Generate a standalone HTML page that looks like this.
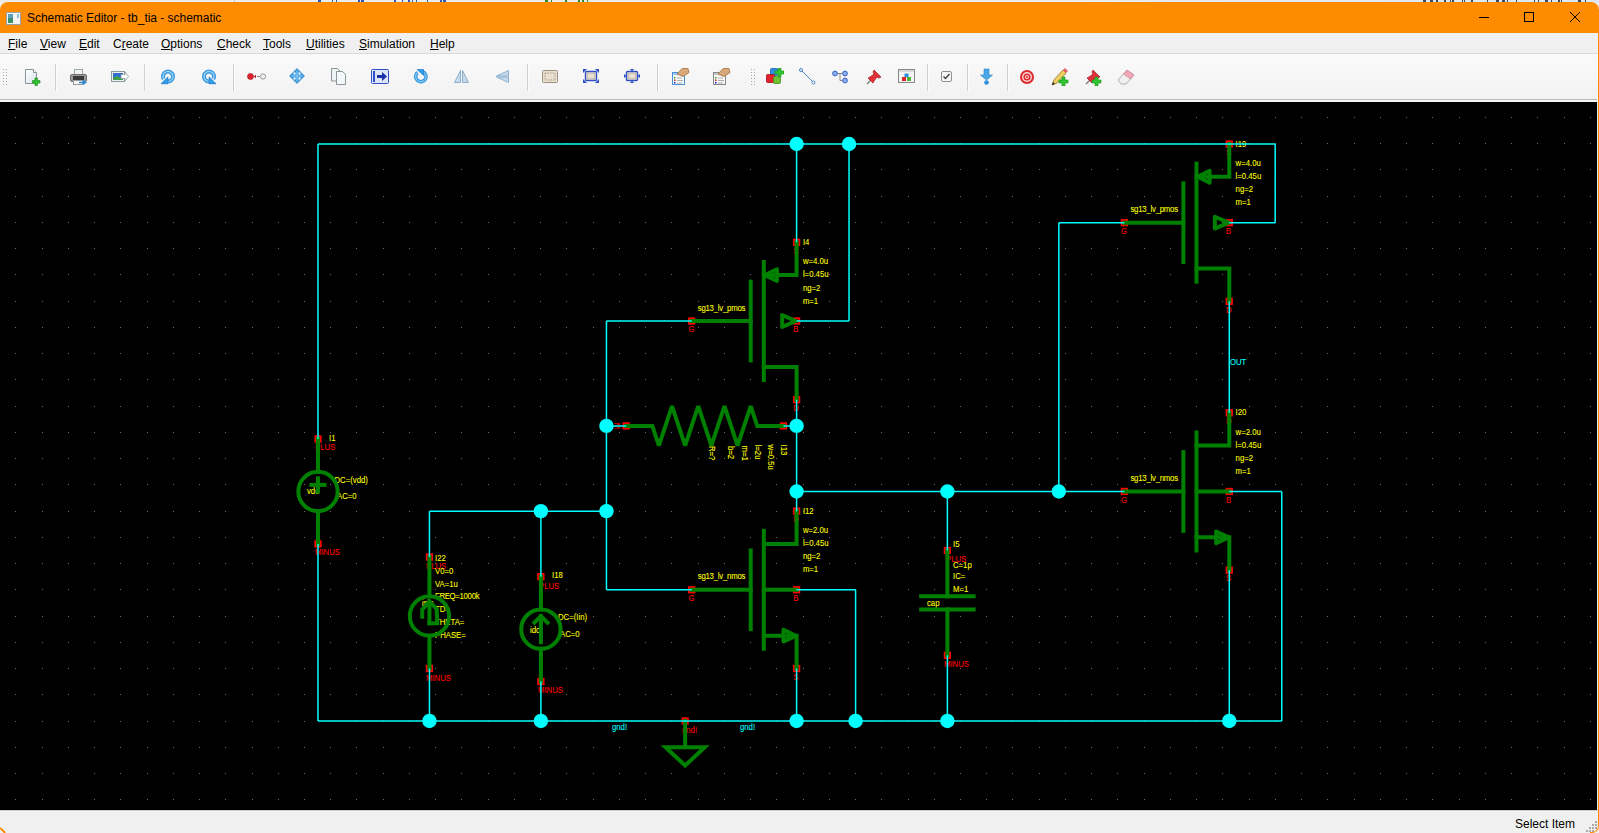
<!DOCTYPE html>
<html><head><meta charset="utf-8">
<style>
*{margin:0;padding:0;box-sizing:border-box}
html,body{width:1599px;height:833px;overflow:hidden;background:#f0f0f0;font-family:"Liberation Sans",sans-serif}
#top{position:absolute;left:0;top:0;width:1599px;height:3px;background:linear-gradient(90deg,#ececec 0,#e9ecef 60%,#dde6f2 100%)}
#title{position:absolute;left:0;top:2px;width:1599px;height:31px;background:#ff8c00;border-radius:8px 8px 0 0}
#title .t{position:absolute;left:27px;top:9px;font-size:12px;color:#000;letter-spacing:-0.03px}
#title .ic{position:absolute;left:6px;top:10px;width:15px;height:13px}
.wc{position:absolute;top:0}
#menu{position:absolute;left:0;top:33px;width:1598px;height:21px;background:#f0f0f0;border-bottom:1px solid #dadada}
#menu span{position:absolute;top:4px;font-size:12px;color:#000}
#menu u{text-decoration:underline;text-underline-offset:1px;text-decoration-thickness:1px}
#tb{position:absolute;left:0;top:54px;width:1598px;height:48px;background:linear-gradient(#fafafa,#f1f1f1)}
#tbb{position:absolute;left:0;top:99px;width:1597px;height:1px;background:#b9b9b9}
#tbw{position:absolute;left:0;top:100px;width:1597px;height:2px;background:#f7f7f7}
.sep{position:absolute;top:10px;width:2px;height:27px;background:#d0d0d0;border-right:1px solid #fcfcfc}
.ico{position:absolute}
.sch{position:absolute;left:0;top:102px}
#status{position:absolute;left:0;top:810px;width:1598px;height:23px;background:#f0f0f0;border-top:1px solid #cdcdcd;box-shadow:inset 0 1px 0 #f7f7f7}
#status .t{position:absolute;left:1515px;top:6px;font-size:12px;color:#000}
#rb{position:absolute;left:1590px;top:10px;width:9px;height:823px;border-right:1px solid #ff8c00;border-bottom:1px solid #ff8c00;border-bottom-right-radius:7px}
#rl{position:absolute;left:1597px;top:102px;width:1px;height:708px;background:#dfe6ee}
.grip{position:absolute;width:2px;height:2px;background:#a8a8a8}
.y{fill:#ffff00;stroke:#ffff00;stroke-width:0.08}.r{fill:#ff0000;stroke:#ff0000;stroke-width:0.08}.c{fill:#00ffff;stroke:#00ffff;stroke-width:0.08}
</style></head><body>
<div id="top"></div>
<svg style="position:absolute;left:0;top:0" width="1599" height="3"><rect x="234" y="0" width="1" height="2" fill="#c4c4c4"/><rect x="318" y="0" width="3" height="2" fill="#2a58c0"/><rect x="332" y="0" width="1" height="2" fill="#2a58c0"/><rect x="336" y="0" width="1" height="2" fill="#2a58c0"/><rect x="358" y="0" width="2" height="2" fill="#2a58c0"/><rect x="361" y="0" width="3" height="2" fill="#2a58c0"/><rect x="394" y="0" width="2" height="2" fill="#2a58c0"/><rect x="402" y="0" width="1" height="2" fill="#2a58c0"/><rect x="408" y="0" width="2" height="2" fill="#2a58c0"/><rect x="412" y="0" width="1" height="2" fill="#2a58c0"/><rect x="416" y="0" width="1" height="2" fill="#2a58c0"/><rect x="427" y="0" width="1" height="2" fill="#2a58c0"/><rect x="440" y="0" width="2" height="2" fill="#2a58c0"/><rect x="443" y="0" width="3" height="2" fill="#2a58c0"/><rect x="545" y="0" width="3" height="2" fill="#2a8a2a"/><rect x="551" y="0" width="1" height="2" fill="#2a8a2a"/><rect x="565" y="0" width="2" height="2" fill="#2a8a2a"/><rect x="578" y="0" width="2" height="2" fill="#2a8a2a"/><rect x="582" y="0" width="2" height="2" fill="#2a8a2a"/><rect x="587" y="0" width="1" height="2" fill="#2a8a2a"/><rect x="1423" y="0" width="3" height="2" fill="#3a4a60"/><rect x="1430" y="0" width="3" height="2" fill="#3a4a60"/><rect x="1436" y="0" width="2" height="2" fill="#3a4a60"/><rect x="1444" y="0" width="2" height="2" fill="#3a4a60"/><rect x="1450" y="0" width="1" height="2" fill="#3a4a60"/><rect x="1452" y="0" width="2" height="2" fill="#3a4a60"/><rect x="1462" y="0" width="1" height="2" fill="#3a4a60"/><rect x="1464" y="0" width="1" height="2" fill="#3a4a60"/><rect x="1471" y="0" width="2" height="2" fill="#3a4a60"/><rect x="1487" y="0" width="1" height="2" fill="#3a4a60"/><rect x="1496" y="0" width="3" height="2" fill="#3a4a60"/><rect x="1502" y="0" width="3" height="2" fill="#3a4a60"/><rect x="1507" y="0" width="1" height="2" fill="#3a4a60"/><rect x="1516" y="0" width="1" height="2" fill="#3a4a60"/><rect x="1534" y="0" width="1" height="2" fill="#3a4a60"/><rect x="1538" y="0" width="1" height="2" fill="#3a4a60"/><rect x="1545" y="0" width="3" height="2" fill="#3a4a60"/><rect x="1551" y="0" width="1" height="2" fill="#3a4a60"/><rect x="1558" y="0" width="2" height="2" fill="#3a4a60"/><rect x="1561" y="0" width="1" height="2" fill="#3a4a60"/><rect x="1578" y="0" width="3" height="2" fill="#3a4a60"/><rect x="1585" y="0" width="1" height="2" fill="#3a4a60"/></svg>
<div id="title">
<svg class="ic" width="15" height="13" viewBox="0 0 15 13"><rect x="0.5" y="0.5" width="14" height="12" fill="#f4f4f4" stroke="#9aa3ad"/><rect x="2" y="2" width="5" height="9" fill="#3d8f6a"/><rect x="2" y="2" width="5" height="4" fill="#5a9fc0"/><rect x="11" y="2" width="2" height="4" fill="#8fc0d8"/></svg>
<div class="t">Schematic Editor - tb_tia - schematic</div>
<svg class="wc" style="left:1470px" width="120" height="31" viewBox="0 0 120 31">
<path d="M9 15.5h10" stroke="#000" stroke-width="1"/>
<rect x="54.5" y="10.5" width="9" height="9" fill="none" stroke="#000" stroke-width="1"/>
<path d="M100 10l10 10M110 10l-10 10" stroke="#000" stroke-width="1"/>
</svg>
</div>
<div id="menu">
<span style="left:8px"><u>F</u>ile</span>
<span style="left:40px"><u>V</u>iew</span>
<span style="left:79px"><u>E</u>dit</span>
<span style="left:113px">C<u>r</u>eate</span>
<span style="left:161px"><u>O</u>ptions</span>
<span style="left:217px"><u>C</u>heck</span>
<span style="left:263px"><u>T</u>ools</span>
<span style="left:306px"><u>U</u>tilities</span>
<span style="left:359px"><u>S</u>imulation</span>
<span style="left:430px"><u>H</u>elp</span>
</div>
<div id="tb">
<svg class="ico" style="left:3px;top:14px" width="5" height="18" viewBox="0 0 5 18"><g fill="#a8a8a8"><rect x="0" y="1" width="1" height="1"/><rect x="3" y="1" width="1" height="1"/><rect x="0" y="4" width="1" height="1"/><rect x="3" y="4" width="1" height="1"/><rect x="0" y="7" width="1" height="1"/><rect x="3" y="7" width="1" height="1"/><rect x="0" y="10" width="1" height="1"/><rect x="3" y="10" width="1" height="1"/><rect x="0" y="13" width="1" height="1"/><rect x="3" y="13" width="1" height="1"/><rect x="0" y="16" width="1" height="1"/><rect x="3" y="16" width="1" height="1"/></g></svg>
<svg class="ico" style="left:24px;top:14px" width="17" height="18" viewBox="0 0 17 18"><defs><linearGradient id="pg" x1="0" y1="0" x2="1" y2="1"><stop offset="0" stop-color="#ffffff"/><stop offset="1" stop-color="#d8e4e8"/></linearGradient></defs><path d="M1.5 1.5h8l3 3v11h-11z" fill="url(#pg)" stroke="#8a9598"/><path d="M9.5 1.5v3h3" fill="#fff" stroke="#8a9598"/><path d="M11 10h2.4v2.6h2.6v2.4h-2.6v2.6h-2.4v-2.6h-2.6v-2.4h2.6z" fill="#2fc52f" stroke="#1a8f1a" stroke-width="0.7"/></svg>
<div class="sep" style="left:55px"></div>
<svg class="ico" style="left:70px;top:14px" width="18" height="18" viewBox="0 0 18 18"><rect x="4.5" y="1.5" width="8" height="6" fill="#f4f4f4" stroke="#9aa"/><rect x="0.5" y="6.5" width="16" height="7" rx="1.5" fill="#9a9a9a" stroke="#707070"/><rect x="3" y="8" width="11" height="4" fill="#3a3a3a"/><rect x="3.5" y="12.5" width="9" height="4" fill="#fafafa" stroke="#999"/><path d="M9 14.5h6M13 12.5l2.5 2-2.5 2" stroke="#2a8ad8" stroke-width="1.6" fill="none"/></svg>
<svg class="ico" style="left:111px;top:15px" width="18" height="15" viewBox="0 0 18 15"><rect x="0.5" y="2.5" width="13" height="10" fill="#f0f0f0" stroke="#8a9aa0"/><rect x="2" y="4" width="10" height="7" fill="#2f6fcf"/><path d="M2 9l4-2 6 3v1H2z" fill="#3f9f4f"/><path d="M10 5.5h4v-2.5l3.5 4.5-3.5 4.5v-2.5h-4z" fill="#fff" stroke="#8a9aa0" stroke-width="0.8"/></svg>
<div class="sep" style="left:144px"></div>
<svg class="ico" style="left:160px;top:15px" width="16" height="16" viewBox="0 0 16 16"><g><path d="M8 12.5A5 5 0 1 0 3.67 10" fill="none" stroke="#3d9be0" stroke-width="4"/><path d="M8 12.5A5 5 0 1 0 3.67 10" fill="none" stroke="#9ad6fa" stroke-width="1.2"/><path d="M1 14.7H7.9V8z" fill="#2aa0f0" stroke="#1a6fc0" stroke-width="0.7"/></g></svg>
<svg class="ico" style="left:201px;top:15px" width="16" height="16" viewBox="0 0 16 16"><g transform="translate(16 0) scale(-1 1)"><path d="M8 12.5A5 5 0 1 0 3.67 10" fill="none" stroke="#3d9be0" stroke-width="4"/><path d="M8 12.5A5 5 0 1 0 3.67 10" fill="none" stroke="#9ad6fa" stroke-width="1.2"/><path d="M1 14.7H7.9V8z" fill="#2aa0f0" stroke="#1a6fc0" stroke-width="0.7"/></g></svg>
<div class="sep" style="left:233px"></div>
<svg class="ico" style="left:247px;top:18px" width="20" height="9" viewBox="0 0 20 9"><circle cx="3.5" cy="4.5" r="3" fill="#e0202a" stroke="#a01018" stroke-width="0.6"/><path d="M9 2.8l-2 1.7 2 1.7z" fill="#a01018"/><path d="M10 4.5h3" stroke="#888" stroke-width="1"/><circle cx="16" cy="4.5" r="2.6" fill="#f0f0f0" stroke="#9a9a9a" stroke-width="1"/></svg>
<svg class="ico" style="left:289px;top:14px" width="16" height="16" viewBox="0 0 16 16"><path d="M8 0.5L15.5 8 8 15.5 0.5 8z" fill="#3a9ae0" stroke="#2a7ac0" stroke-width="0.6"/><rect x="4.5" y="4.5" width="2" height="2" fill="#fff"/><rect x="9.5" y="4.5" width="2" height="2" fill="#fff"/><rect x="4.5" y="9.5" width="2" height="2" fill="#fff"/><rect x="9.5" y="9.5" width="2" height="2" fill="#fff"/><path d="M8 2.5v11M2.5 8h11" stroke="#8fd0f8" stroke-width="1"/></svg>
<svg class="ico" style="left:331px;top:14px" width="17" height="18" viewBox="0 0 17 18"><path d="M0.5 0.5h6l2.5 2.5v10H0.5z" fill="#eef3f4" stroke="#8a9598"/><path d="M5.5 3.5h6l3 3v10h-9z" fill="#f4f8f9" stroke="#8a9598"/></svg>
<svg class="ico" style="left:371px;top:15px" width="18" height="15" viewBox="0 0 18 15"><rect x="0.5" y="0.5" width="17" height="14" rx="1" fill="#dde6f8" stroke="#3050c8"/><rect x="2" y="2" width="2" height="11" fill="#3050c8"/><path d="M6 6h5v-3l5 4.5-5 4.5v-3h-5z" fill="#1a2fa8"/></svg>
<svg class="ico" style="left:413px;top:15px" width="16" height="16" viewBox="0 0 16 16"><path d="M4.5 3.5A5.2 5.2 0 1 0 9.5 2.6" fill="none" stroke="#3d9be0" stroke-width="3.6"/><path d="M4.5 3.5A5.2 5.2 0 1 0 9.5 2.6" fill="none" stroke="#9ad6fa" stroke-width="1"/><path d="M4 0.5h6.5v6z" fill="#2aa0f0" stroke="#1a6fc0" stroke-width="0.6"/></svg>
<svg class="ico" style="left:454px;top:16px" width="15" height="13" viewBox="0 0 15 13"><path d="M6.5 0.5v12h-6z" fill="#c8daea" stroke="#8ab0d0"/><path d="M8.5 0.5v12h6z" fill="#c8daea" stroke="#8ab0d0"/></svg>
<svg class="ico" style="left:496px;top:16px" width="13" height="13" viewBox="0 0 13 13"><path d="M12.5 0.5L0.5 6h12z" fill="#c8daea" stroke="#8ab0d0"/><path d="M12.5 12.5L0.5 7h12z" fill="#c8daea" stroke="#8ab0d0"/></svg>
<div class="sep" style="left:527px"></div>
<svg class="ico" style="left:542px;top:16px" width="17" height="14" viewBox="0 0 17 14"><rect x="0.5" y="0.5" width="15" height="12" rx="1" fill="#e8e0d0" stroke="#a09080"/><rect x="3" y="3" width="10" height="7" fill="none" stroke="#b0a090" stroke-dasharray="1.5 1"/></svg>
<svg class="ico" style="left:583px;top:15px" width="17" height="15" viewBox="0 0 17 15"><rect x="2.5" y="2.5" width="11" height="9" rx="1" fill="#e8e0d0" stroke="#3050c8" stroke-width="1.4"/><rect x="4.5" y="4.5" width="7" height="5" fill="none" stroke="#b0a090" stroke-dasharray="1 1"/><path d="M0 0h4l-4 4zM16 0h-4l4 4zM0 14h4l-4-4zM16 14h-4l4-4z" fill="#3050c8"/></svg>
<svg class="ico" style="left:624px;top:15px" width="17" height="15" viewBox="0 0 17 15"><rect x="2.5" y="2.5" width="11" height="9" rx="1" fill="#e8e0d0" stroke="#3050c8" stroke-width="1.4"/><rect x="4.5" y="4.5" width="7" height="5" fill="none" stroke="#b0a090" stroke-dasharray="1 1"/><path d="M6 0h4l-2 2.5zM6 14h4l-2-2.5zM0 5v4l2.5-2zM16 5v4l-2.5-2z" fill="#3050c8"/></svg>
<div class="sep" style="left:657px"></div>
<svg class="ico" style="left:672px;top:14px" width="18" height="18" viewBox="0 0 18 18"><rect x="0.5" y="4.5" width="12" height="12" fill="#f8f8f8" stroke="#4a90d8"/><rect x="1" y="5" width="11" height="2" fill="#9ac8f0"/><rect x="2" y="9" width="1.5" height="1.5" fill="#2a2"/><rect x="2" y="11.5" width="1.5" height="1.5" fill="#d22"/><rect x="2" y="14" width="1.5" height="1.5" fill="#22d"/><path d="M5 10h5M5 12.5h6M5 15h5" stroke="#999" stroke-width="0.8"/><path d="M5 6l5-5.5h6l1 4-6 4z" fill="#d8a878" stroke="#a07048" stroke-width="0.8"/></svg>
<svg class="ico" style="left:713px;top:14px" width="18" height="18" viewBox="0 0 18 18"><rect x="0.5" y="4.5" width="12" height="12" fill="#f8f8f8" stroke="#888888"/><rect x="1" y="5" width="11" height="2" fill="#c8c8c8"/><rect x="2" y="9" width="1.5" height="1.5" fill="#2a2"/><rect x="2" y="11.5" width="1.5" height="1.5" fill="#d22"/><rect x="2" y="14" width="1.5" height="1.5" fill="#22d"/><path d="M5 10h5M5 12.5h6M5 15h5" stroke="#999" stroke-width="0.8"/><path d="M5 6l5-5.5h6l1 4-6 4z" fill="#d8a878" stroke="#a07048" stroke-width="0.8"/></svg>
<svg class="ico" style="left:751px;top:14px" width="5" height="18" viewBox="0 0 5 18"><g fill="#a8a8a8"><rect x="0" y="1" width="1" height="1"/><rect x="3" y="1" width="1" height="1"/><rect x="0" y="4" width="1" height="1"/><rect x="3" y="4" width="1" height="1"/><rect x="0" y="7" width="1" height="1"/><rect x="3" y="7" width="1" height="1"/><rect x="0" y="10" width="1" height="1"/><rect x="3" y="10" width="1" height="1"/><rect x="0" y="13" width="1" height="1"/><rect x="3" y="13" width="1" height="1"/><rect x="0" y="16" width="1" height="1"/><rect x="3" y="16" width="1" height="1"/></g></svg>
<svg class="ico" style="left:766px;top:14px" width="18" height="17" viewBox="0 0 18 17"><rect x="4.5" y="0.5" width="7" height="7" rx="1" fill="#2a90e0" stroke="#1a60b0" stroke-width="0.8"/><rect x="0.5" y="6.5" width="8" height="8" rx="1" fill="#e0202a" stroke="#a01018" stroke-width="0.8"/><rect x="7.5" y="8.5" width="7" height="7" rx="1" fill="#70c030" stroke="#4a9020" stroke-width="0.8"/><path d="M12 0h3v3h3v3h-3v3h-3v-3h-3v-3h3z" fill="#2fc52f" stroke="#1a8f1a" stroke-width="0.6"/></svg>
<svg class="ico" style="left:799px;top:14px" width="17" height="17" viewBox="0 0 17 17"><path d="M2.5 2.5L14 14" stroke="#4a80c0" stroke-width="1"/><circle cx="2" cy="2" r="1.5" fill="#fff" stroke="#4a80c0"/><circle cx="14.5" cy="14.5" r="1.5" fill="#fff" stroke="#4a80c0"/></svg>
<svg class="ico" style="left:832px;top:16px" width="17" height="14" viewBox="0 0 17 14"><path d="M4 3.5h8M8 3.5v7h4" stroke="#888" stroke-width="1" fill="none"/><circle cx="3" cy="3.5" r="2.4" fill="#8ab0f0" stroke="#3a60c8"/><circle cx="13" cy="3.5" r="2.4" fill="#8ab0f0" stroke="#3a60c8"/><circle cx="13" cy="10.5" r="2.4" fill="#8ab0f0" stroke="#3a60c8"/></svg>
<svg class="ico" style="left:866px;top:15px" width="16" height="16" viewBox="0 0 16 16"><path d="M1 15L6 10" stroke="#777" stroke-width="1.2"/><path d="M8 1l7 7-2 1-2 -1-3 4-1 2-5-5 2-1 4-3-1-2z" fill="#e03038" stroke="#a01820" stroke-width="0.7"/></svg>
<svg class="ico" style="left:898px;top:15px" width="18" height="15" viewBox="0 0 18 15"><rect x="0.5" y="0.5" width="16" height="13" fill="#f4f4f4" stroke="#888"/><rect x="1" y="1" width="15" height="2" fill="#d8d8d8"/><rect x="6.5" y="4.5" width="4" height="4" fill="#2a90e0"/><rect x="4" y="8" width="4" height="4" fill="#e0202a"/><rect x="9" y="8" width="4" height="4" fill="#50b030"/></svg>
<div class="sep" style="left:927px"></div>
<svg class="ico" style="left:941px;top:17px" width="12" height="12" viewBox="0 0 12 12"><rect x="0.5" y="0.5" width="10" height="10" rx="1.5" fill="#f8f8f8" stroke="#909090"/><path d="M2.5 5.5l2 2 4-4.5" stroke="#404040" stroke-width="1.4" fill="none"/></svg>
<div class="sep" style="left:967px"></div>
<svg class="ico" style="left:980px;top:14px" width="13" height="18" viewBox="0 0 13 18"><path d="M4 1h5v6h3.5L6.5 12 0.5 7H4z" fill="#4aa8e8" stroke="#2a80c8" stroke-width="0.6"/><circle cx="6.5" cy="14.5" r="2.3" fill="#2a90e0"/></svg>
<div class="sep" style="left:1007px"></div>
<svg class="ico" style="left:1019px;top:15px" width="16" height="16" viewBox="0 0 16 16"><circle cx="8" cy="8" r="7" fill="#e0282e"/><circle cx="8" cy="8" r="5" fill="#f8d8d8"/><circle cx="8" cy="8" r="3.6" fill="#e0282e"/><circle cx="8" cy="8" r="2" fill="#f8d8d8"/><circle cx="8" cy="8" r="1" fill="#e0282e"/></svg>
<svg class="ico" style="left:1051px;top:14px" width="18" height="18" viewBox="0 0 18 18"><path d="M1 17l2-5 9-10 3 3-9 10z" fill="#f0d060" stroke="#907020" stroke-width="0.8"/><path d="M12 2l2-2 3 3-2 2z" fill="#e86070"/><path d="M1 17l1-3 2 2z" fill="#222"/><path d="M11 9h3v3h3v3h-3v3h-3v-3h-3v-3h3z" fill="#2fc52f" stroke="#1a8f1a" stroke-width="0.6"/></svg>
<svg class="ico" style="left:1085px;top:14px" width="17" height="18" viewBox="0 0 17 18"><path d="M1 16L6 11" stroke="#777" stroke-width="1.2"/><path d="M8 2l7 7-2 1-2 -1-3 4-1 2-5-5 2-1 4-3-1-2z" fill="#e03038" stroke="#a01820" stroke-width="0.7"/><path d="M10 9h3v3h3v3h-3v3h-3v-3h-3v-3h3z" fill="#2fc52f" stroke="#1a8f1a" stroke-width="0.6"/></svg>
<svg class="ico" style="left:1117px;top:14px" width="18" height="17" viewBox="0 0 18 17"><path d="M1 12l9-10 7 5-8 9H4z" fill="#f0f0f0" stroke="#a0a0a0" stroke-width="0.8"/><path d="M10 2l7 5-3.5 4-7-5z" fill="#f0a8b8" stroke="#c88090" stroke-width="0.6"/></svg>
</div>
<div id="tbb"></div><div id="tbw"></div>
<svg class="sch" width="1597" height="708" viewBox="0 102 1597 708">
<rect x="0" y="102" width="1597" height="708" fill="#000"/>
<path fill="#6c6c6c" d="M15 117h1v1h-1zM15 143h1v1h-1zM15 169h1v1h-1zM15 196h1v1h-1zM15 222h1v1h-1zM15 248h1v1h-1zM15 274h1v1h-1zM15 301h1v1h-1zM15 327h1v1h-1zM15 353h1v1h-1zM15 379h1v1h-1zM15 406h1v1h-1zM15 432h1v1h-1zM15 458h1v1h-1zM15 484h1v1h-1zM15 511h1v1h-1zM15 537h1v1h-1zM15 563h1v1h-1zM15 589h1v1h-1zM15 616h1v1h-1zM15 642h1v1h-1zM15 668h1v1h-1zM15 694h1v1h-1zM15 721h1v1h-1zM15 747h1v1h-1zM15 773h1v1h-1zM15 799h1v1h-1zM42 117h1v1h-1zM42 143h1v1h-1zM42 169h1v1h-1zM42 196h1v1h-1zM42 222h1v1h-1zM42 248h1v1h-1zM42 274h1v1h-1zM42 301h1v1h-1zM42 327h1v1h-1zM42 353h1v1h-1zM42 379h1v1h-1zM42 406h1v1h-1zM42 432h1v1h-1zM42 458h1v1h-1zM42 484h1v1h-1zM42 511h1v1h-1zM42 537h1v1h-1zM42 563h1v1h-1zM42 589h1v1h-1zM42 616h1v1h-1zM42 642h1v1h-1zM42 668h1v1h-1zM42 694h1v1h-1zM42 721h1v1h-1zM42 747h1v1h-1zM42 773h1v1h-1zM42 799h1v1h-1zM68 117h1v1h-1zM68 143h1v1h-1zM68 169h1v1h-1zM68 196h1v1h-1zM68 222h1v1h-1zM68 248h1v1h-1zM68 274h1v1h-1zM68 301h1v1h-1zM68 327h1v1h-1zM68 353h1v1h-1zM68 379h1v1h-1zM68 406h1v1h-1zM68 432h1v1h-1zM68 458h1v1h-1zM68 484h1v1h-1zM68 511h1v1h-1zM68 537h1v1h-1zM68 563h1v1h-1zM68 589h1v1h-1zM68 616h1v1h-1zM68 642h1v1h-1zM68 668h1v1h-1zM68 694h1v1h-1zM68 721h1v1h-1zM68 747h1v1h-1zM68 773h1v1h-1zM68 799h1v1h-1zM94 117h1v1h-1zM94 143h1v1h-1zM94 169h1v1h-1zM94 196h1v1h-1zM94 222h1v1h-1zM94 248h1v1h-1zM94 274h1v1h-1zM94 301h1v1h-1zM94 327h1v1h-1zM94 353h1v1h-1zM94 379h1v1h-1zM94 406h1v1h-1zM94 432h1v1h-1zM94 458h1v1h-1zM94 484h1v1h-1zM94 511h1v1h-1zM94 537h1v1h-1zM94 563h1v1h-1zM94 589h1v1h-1zM94 616h1v1h-1zM94 642h1v1h-1zM94 668h1v1h-1zM94 694h1v1h-1zM94 721h1v1h-1zM94 747h1v1h-1zM94 773h1v1h-1zM94 799h1v1h-1zM120 117h1v1h-1zM120 143h1v1h-1zM120 169h1v1h-1zM120 196h1v1h-1zM120 222h1v1h-1zM120 248h1v1h-1zM120 274h1v1h-1zM120 301h1v1h-1zM120 327h1v1h-1zM120 353h1v1h-1zM120 379h1v1h-1zM120 406h1v1h-1zM120 432h1v1h-1zM120 458h1v1h-1zM120 484h1v1h-1zM120 511h1v1h-1zM120 537h1v1h-1zM120 563h1v1h-1zM120 589h1v1h-1zM120 616h1v1h-1zM120 642h1v1h-1zM120 668h1v1h-1zM120 694h1v1h-1zM120 721h1v1h-1zM120 747h1v1h-1zM120 773h1v1h-1zM120 799h1v1h-1zM147 117h1v1h-1zM147 143h1v1h-1zM147 169h1v1h-1zM147 196h1v1h-1zM147 222h1v1h-1zM147 248h1v1h-1zM147 274h1v1h-1zM147 301h1v1h-1zM147 327h1v1h-1zM147 353h1v1h-1zM147 379h1v1h-1zM147 406h1v1h-1zM147 432h1v1h-1zM147 458h1v1h-1zM147 484h1v1h-1zM147 511h1v1h-1zM147 537h1v1h-1zM147 563h1v1h-1zM147 589h1v1h-1zM147 616h1v1h-1zM147 642h1v1h-1zM147 668h1v1h-1zM147 694h1v1h-1zM147 721h1v1h-1zM147 747h1v1h-1zM147 773h1v1h-1zM147 799h1v1h-1zM173 117h1v1h-1zM173 143h1v1h-1zM173 169h1v1h-1zM173 196h1v1h-1zM173 222h1v1h-1zM173 248h1v1h-1zM173 274h1v1h-1zM173 301h1v1h-1zM173 327h1v1h-1zM173 353h1v1h-1zM173 379h1v1h-1zM173 406h1v1h-1zM173 432h1v1h-1zM173 458h1v1h-1zM173 484h1v1h-1zM173 511h1v1h-1zM173 537h1v1h-1zM173 563h1v1h-1zM173 589h1v1h-1zM173 616h1v1h-1zM173 642h1v1h-1zM173 668h1v1h-1zM173 694h1v1h-1zM173 721h1v1h-1zM173 747h1v1h-1zM173 773h1v1h-1zM173 799h1v1h-1zM199 117h1v1h-1zM199 143h1v1h-1zM199 169h1v1h-1zM199 196h1v1h-1zM199 222h1v1h-1zM199 248h1v1h-1zM199 274h1v1h-1zM199 301h1v1h-1zM199 327h1v1h-1zM199 353h1v1h-1zM199 379h1v1h-1zM199 406h1v1h-1zM199 432h1v1h-1zM199 458h1v1h-1zM199 484h1v1h-1zM199 511h1v1h-1zM199 537h1v1h-1zM199 563h1v1h-1zM199 589h1v1h-1zM199 616h1v1h-1zM199 642h1v1h-1zM199 668h1v1h-1zM199 694h1v1h-1zM199 721h1v1h-1zM199 747h1v1h-1zM199 773h1v1h-1zM199 799h1v1h-1zM225 117h1v1h-1zM225 143h1v1h-1zM225 169h1v1h-1zM225 196h1v1h-1zM225 222h1v1h-1zM225 248h1v1h-1zM225 274h1v1h-1zM225 301h1v1h-1zM225 327h1v1h-1zM225 353h1v1h-1zM225 379h1v1h-1zM225 406h1v1h-1zM225 432h1v1h-1zM225 458h1v1h-1zM225 484h1v1h-1zM225 511h1v1h-1zM225 537h1v1h-1zM225 563h1v1h-1zM225 589h1v1h-1zM225 616h1v1h-1zM225 642h1v1h-1zM225 668h1v1h-1zM225 694h1v1h-1zM225 721h1v1h-1zM225 747h1v1h-1zM225 773h1v1h-1zM225 799h1v1h-1zM252 117h1v1h-1zM252 143h1v1h-1zM252 169h1v1h-1zM252 196h1v1h-1zM252 222h1v1h-1zM252 248h1v1h-1zM252 274h1v1h-1zM252 301h1v1h-1zM252 327h1v1h-1zM252 353h1v1h-1zM252 379h1v1h-1zM252 406h1v1h-1zM252 432h1v1h-1zM252 458h1v1h-1zM252 484h1v1h-1zM252 511h1v1h-1zM252 537h1v1h-1zM252 563h1v1h-1zM252 589h1v1h-1zM252 616h1v1h-1zM252 642h1v1h-1zM252 668h1v1h-1zM252 694h1v1h-1zM252 721h1v1h-1zM252 747h1v1h-1zM252 773h1v1h-1zM252 799h1v1h-1zM278 117h1v1h-1zM278 143h1v1h-1zM278 169h1v1h-1zM278 196h1v1h-1zM278 222h1v1h-1zM278 248h1v1h-1zM278 274h1v1h-1zM278 301h1v1h-1zM278 327h1v1h-1zM278 353h1v1h-1zM278 379h1v1h-1zM278 406h1v1h-1zM278 432h1v1h-1zM278 458h1v1h-1zM278 484h1v1h-1zM278 511h1v1h-1zM278 537h1v1h-1zM278 563h1v1h-1zM278 589h1v1h-1zM278 616h1v1h-1zM278 642h1v1h-1zM278 668h1v1h-1zM278 694h1v1h-1zM278 721h1v1h-1zM278 747h1v1h-1zM278 773h1v1h-1zM278 799h1v1h-1zM304 117h1v1h-1zM304 143h1v1h-1zM304 169h1v1h-1zM304 196h1v1h-1zM304 222h1v1h-1zM304 248h1v1h-1zM304 274h1v1h-1zM304 301h1v1h-1zM304 327h1v1h-1zM304 353h1v1h-1zM304 379h1v1h-1zM304 406h1v1h-1zM304 432h1v1h-1zM304 458h1v1h-1zM304 484h1v1h-1zM304 511h1v1h-1zM304 537h1v1h-1zM304 563h1v1h-1zM304 589h1v1h-1zM304 616h1v1h-1zM304 642h1v1h-1zM304 668h1v1h-1zM304 694h1v1h-1zM304 721h1v1h-1zM304 747h1v1h-1zM304 773h1v1h-1zM304 799h1v1h-1zM330 117h1v1h-1zM330 143h1v1h-1zM330 169h1v1h-1zM330 196h1v1h-1zM330 222h1v1h-1zM330 248h1v1h-1zM330 274h1v1h-1zM330 301h1v1h-1zM330 327h1v1h-1zM330 353h1v1h-1zM330 379h1v1h-1zM330 406h1v1h-1zM330 432h1v1h-1zM330 458h1v1h-1zM330 484h1v1h-1zM330 511h1v1h-1zM330 537h1v1h-1zM330 563h1v1h-1zM330 589h1v1h-1zM330 616h1v1h-1zM330 642h1v1h-1zM330 668h1v1h-1zM330 694h1v1h-1zM330 721h1v1h-1zM330 747h1v1h-1zM330 773h1v1h-1zM330 799h1v1h-1zM356 117h1v1h-1zM356 143h1v1h-1zM356 169h1v1h-1zM356 196h1v1h-1zM356 222h1v1h-1zM356 248h1v1h-1zM356 274h1v1h-1zM356 301h1v1h-1zM356 327h1v1h-1zM356 353h1v1h-1zM356 379h1v1h-1zM356 406h1v1h-1zM356 432h1v1h-1zM356 458h1v1h-1zM356 484h1v1h-1zM356 511h1v1h-1zM356 537h1v1h-1zM356 563h1v1h-1zM356 589h1v1h-1zM356 616h1v1h-1zM356 642h1v1h-1zM356 668h1v1h-1zM356 694h1v1h-1zM356 721h1v1h-1zM356 747h1v1h-1zM356 773h1v1h-1zM356 799h1v1h-1zM383 117h1v1h-1zM383 143h1v1h-1zM383 169h1v1h-1zM383 196h1v1h-1zM383 222h1v1h-1zM383 248h1v1h-1zM383 274h1v1h-1zM383 301h1v1h-1zM383 327h1v1h-1zM383 353h1v1h-1zM383 379h1v1h-1zM383 406h1v1h-1zM383 432h1v1h-1zM383 458h1v1h-1zM383 484h1v1h-1zM383 511h1v1h-1zM383 537h1v1h-1zM383 563h1v1h-1zM383 589h1v1h-1zM383 616h1v1h-1zM383 642h1v1h-1zM383 668h1v1h-1zM383 694h1v1h-1zM383 721h1v1h-1zM383 747h1v1h-1zM383 773h1v1h-1zM383 799h1v1h-1zM409 117h1v1h-1zM409 143h1v1h-1zM409 169h1v1h-1zM409 196h1v1h-1zM409 222h1v1h-1zM409 248h1v1h-1zM409 274h1v1h-1zM409 301h1v1h-1zM409 327h1v1h-1zM409 353h1v1h-1zM409 379h1v1h-1zM409 406h1v1h-1zM409 432h1v1h-1zM409 458h1v1h-1zM409 484h1v1h-1zM409 511h1v1h-1zM409 537h1v1h-1zM409 563h1v1h-1zM409 589h1v1h-1zM409 616h1v1h-1zM409 642h1v1h-1zM409 668h1v1h-1zM409 694h1v1h-1zM409 721h1v1h-1zM409 747h1v1h-1zM409 773h1v1h-1zM409 799h1v1h-1zM435 117h1v1h-1zM435 143h1v1h-1zM435 169h1v1h-1zM435 196h1v1h-1zM435 222h1v1h-1zM435 248h1v1h-1zM435 274h1v1h-1zM435 301h1v1h-1zM435 327h1v1h-1zM435 353h1v1h-1zM435 379h1v1h-1zM435 406h1v1h-1zM435 432h1v1h-1zM435 458h1v1h-1zM435 484h1v1h-1zM435 511h1v1h-1zM435 537h1v1h-1zM435 563h1v1h-1zM435 589h1v1h-1zM435 616h1v1h-1zM435 642h1v1h-1zM435 668h1v1h-1zM435 694h1v1h-1zM435 721h1v1h-1zM435 747h1v1h-1zM435 773h1v1h-1zM435 799h1v1h-1zM461 117h1v1h-1zM461 143h1v1h-1zM461 169h1v1h-1zM461 196h1v1h-1zM461 222h1v1h-1zM461 248h1v1h-1zM461 274h1v1h-1zM461 301h1v1h-1zM461 327h1v1h-1zM461 353h1v1h-1zM461 379h1v1h-1zM461 406h1v1h-1zM461 432h1v1h-1zM461 458h1v1h-1zM461 484h1v1h-1zM461 511h1v1h-1zM461 537h1v1h-1zM461 563h1v1h-1zM461 589h1v1h-1zM461 616h1v1h-1zM461 642h1v1h-1zM461 668h1v1h-1zM461 694h1v1h-1zM461 721h1v1h-1zM461 747h1v1h-1zM461 773h1v1h-1zM461 799h1v1h-1zM488 117h1v1h-1zM488 143h1v1h-1zM488 169h1v1h-1zM488 196h1v1h-1zM488 222h1v1h-1zM488 248h1v1h-1zM488 274h1v1h-1zM488 301h1v1h-1zM488 327h1v1h-1zM488 353h1v1h-1zM488 379h1v1h-1zM488 406h1v1h-1zM488 432h1v1h-1zM488 458h1v1h-1zM488 484h1v1h-1zM488 511h1v1h-1zM488 537h1v1h-1zM488 563h1v1h-1zM488 589h1v1h-1zM488 616h1v1h-1zM488 642h1v1h-1zM488 668h1v1h-1zM488 694h1v1h-1zM488 721h1v1h-1zM488 747h1v1h-1zM488 773h1v1h-1zM488 799h1v1h-1zM514 117h1v1h-1zM514 143h1v1h-1zM514 169h1v1h-1zM514 196h1v1h-1zM514 222h1v1h-1zM514 248h1v1h-1zM514 274h1v1h-1zM514 301h1v1h-1zM514 327h1v1h-1zM514 353h1v1h-1zM514 379h1v1h-1zM514 406h1v1h-1zM514 432h1v1h-1zM514 458h1v1h-1zM514 484h1v1h-1zM514 511h1v1h-1zM514 537h1v1h-1zM514 563h1v1h-1zM514 589h1v1h-1zM514 616h1v1h-1zM514 642h1v1h-1zM514 668h1v1h-1zM514 694h1v1h-1zM514 721h1v1h-1zM514 747h1v1h-1zM514 773h1v1h-1zM514 799h1v1h-1zM540 117h1v1h-1zM540 143h1v1h-1zM540 169h1v1h-1zM540 196h1v1h-1zM540 222h1v1h-1zM540 248h1v1h-1zM540 274h1v1h-1zM540 301h1v1h-1zM540 327h1v1h-1zM540 353h1v1h-1zM540 379h1v1h-1zM540 406h1v1h-1zM540 432h1v1h-1zM540 458h1v1h-1zM540 484h1v1h-1zM540 511h1v1h-1zM540 537h1v1h-1zM540 563h1v1h-1zM540 589h1v1h-1zM540 616h1v1h-1zM540 642h1v1h-1zM540 668h1v1h-1zM540 694h1v1h-1zM540 721h1v1h-1zM540 747h1v1h-1zM540 773h1v1h-1zM540 799h1v1h-1zM566 117h1v1h-1zM566 143h1v1h-1zM566 169h1v1h-1zM566 196h1v1h-1zM566 222h1v1h-1zM566 248h1v1h-1zM566 274h1v1h-1zM566 301h1v1h-1zM566 327h1v1h-1zM566 353h1v1h-1zM566 379h1v1h-1zM566 406h1v1h-1zM566 432h1v1h-1zM566 458h1v1h-1zM566 484h1v1h-1zM566 511h1v1h-1zM566 537h1v1h-1zM566 563h1v1h-1zM566 589h1v1h-1zM566 616h1v1h-1zM566 642h1v1h-1zM566 668h1v1h-1zM566 694h1v1h-1zM566 721h1v1h-1zM566 747h1v1h-1zM566 773h1v1h-1zM566 799h1v1h-1zM593 117h1v1h-1zM593 143h1v1h-1zM593 169h1v1h-1zM593 196h1v1h-1zM593 222h1v1h-1zM593 248h1v1h-1zM593 274h1v1h-1zM593 301h1v1h-1zM593 327h1v1h-1zM593 353h1v1h-1zM593 379h1v1h-1zM593 406h1v1h-1zM593 432h1v1h-1zM593 458h1v1h-1zM593 484h1v1h-1zM593 511h1v1h-1zM593 537h1v1h-1zM593 563h1v1h-1zM593 589h1v1h-1zM593 616h1v1h-1zM593 642h1v1h-1zM593 668h1v1h-1zM593 694h1v1h-1zM593 721h1v1h-1zM593 747h1v1h-1zM593 773h1v1h-1zM593 799h1v1h-1zM619 117h1v1h-1zM619 143h1v1h-1zM619 169h1v1h-1zM619 196h1v1h-1zM619 222h1v1h-1zM619 248h1v1h-1zM619 274h1v1h-1zM619 301h1v1h-1zM619 327h1v1h-1zM619 353h1v1h-1zM619 379h1v1h-1zM619 406h1v1h-1zM619 432h1v1h-1zM619 458h1v1h-1zM619 484h1v1h-1zM619 511h1v1h-1zM619 537h1v1h-1zM619 563h1v1h-1zM619 589h1v1h-1zM619 616h1v1h-1zM619 642h1v1h-1zM619 668h1v1h-1zM619 694h1v1h-1zM619 721h1v1h-1zM619 747h1v1h-1zM619 773h1v1h-1zM619 799h1v1h-1zM645 117h1v1h-1zM645 143h1v1h-1zM645 169h1v1h-1zM645 196h1v1h-1zM645 222h1v1h-1zM645 248h1v1h-1zM645 274h1v1h-1zM645 301h1v1h-1zM645 327h1v1h-1zM645 353h1v1h-1zM645 379h1v1h-1zM645 406h1v1h-1zM645 432h1v1h-1zM645 458h1v1h-1zM645 484h1v1h-1zM645 511h1v1h-1zM645 537h1v1h-1zM645 563h1v1h-1zM645 589h1v1h-1zM645 616h1v1h-1zM645 642h1v1h-1zM645 668h1v1h-1zM645 694h1v1h-1zM645 721h1v1h-1zM645 747h1v1h-1zM645 773h1v1h-1zM645 799h1v1h-1zM671 117h1v1h-1zM671 143h1v1h-1zM671 169h1v1h-1zM671 196h1v1h-1zM671 222h1v1h-1zM671 248h1v1h-1zM671 274h1v1h-1zM671 301h1v1h-1zM671 327h1v1h-1zM671 353h1v1h-1zM671 379h1v1h-1zM671 406h1v1h-1zM671 432h1v1h-1zM671 458h1v1h-1zM671 484h1v1h-1zM671 511h1v1h-1zM671 537h1v1h-1zM671 563h1v1h-1zM671 589h1v1h-1zM671 616h1v1h-1zM671 642h1v1h-1zM671 668h1v1h-1zM671 694h1v1h-1zM671 721h1v1h-1zM671 747h1v1h-1zM671 773h1v1h-1zM671 799h1v1h-1zM698 117h1v1h-1zM698 143h1v1h-1zM698 169h1v1h-1zM698 196h1v1h-1zM698 222h1v1h-1zM698 248h1v1h-1zM698 274h1v1h-1zM698 301h1v1h-1zM698 327h1v1h-1zM698 353h1v1h-1zM698 379h1v1h-1zM698 406h1v1h-1zM698 432h1v1h-1zM698 458h1v1h-1zM698 484h1v1h-1zM698 511h1v1h-1zM698 537h1v1h-1zM698 563h1v1h-1zM698 589h1v1h-1zM698 616h1v1h-1zM698 642h1v1h-1zM698 668h1v1h-1zM698 694h1v1h-1zM698 721h1v1h-1zM698 747h1v1h-1zM698 773h1v1h-1zM698 799h1v1h-1zM724 117h1v1h-1zM724 143h1v1h-1zM724 169h1v1h-1zM724 196h1v1h-1zM724 222h1v1h-1zM724 248h1v1h-1zM724 274h1v1h-1zM724 301h1v1h-1zM724 327h1v1h-1zM724 353h1v1h-1zM724 379h1v1h-1zM724 406h1v1h-1zM724 432h1v1h-1zM724 458h1v1h-1zM724 484h1v1h-1zM724 511h1v1h-1zM724 537h1v1h-1zM724 563h1v1h-1zM724 589h1v1h-1zM724 616h1v1h-1zM724 642h1v1h-1zM724 668h1v1h-1zM724 694h1v1h-1zM724 721h1v1h-1zM724 747h1v1h-1zM724 773h1v1h-1zM724 799h1v1h-1zM750 117h1v1h-1zM750 143h1v1h-1zM750 169h1v1h-1zM750 196h1v1h-1zM750 222h1v1h-1zM750 248h1v1h-1zM750 274h1v1h-1zM750 301h1v1h-1zM750 327h1v1h-1zM750 353h1v1h-1zM750 379h1v1h-1zM750 406h1v1h-1zM750 432h1v1h-1zM750 458h1v1h-1zM750 484h1v1h-1zM750 511h1v1h-1zM750 537h1v1h-1zM750 563h1v1h-1zM750 589h1v1h-1zM750 616h1v1h-1zM750 642h1v1h-1zM750 668h1v1h-1zM750 694h1v1h-1zM750 721h1v1h-1zM750 747h1v1h-1zM750 773h1v1h-1zM750 799h1v1h-1zM776 117h1v1h-1zM776 143h1v1h-1zM776 169h1v1h-1zM776 196h1v1h-1zM776 222h1v1h-1zM776 248h1v1h-1zM776 274h1v1h-1zM776 301h1v1h-1zM776 327h1v1h-1zM776 353h1v1h-1zM776 379h1v1h-1zM776 406h1v1h-1zM776 432h1v1h-1zM776 458h1v1h-1zM776 484h1v1h-1zM776 511h1v1h-1zM776 537h1v1h-1zM776 563h1v1h-1zM776 589h1v1h-1zM776 616h1v1h-1zM776 642h1v1h-1zM776 668h1v1h-1zM776 694h1v1h-1zM776 721h1v1h-1zM776 747h1v1h-1zM776 773h1v1h-1zM776 799h1v1h-1zM803 117h1v1h-1zM803 143h1v1h-1zM803 169h1v1h-1zM803 196h1v1h-1zM803 222h1v1h-1zM803 248h1v1h-1zM803 274h1v1h-1zM803 301h1v1h-1zM803 327h1v1h-1zM803 353h1v1h-1zM803 379h1v1h-1zM803 406h1v1h-1zM803 432h1v1h-1zM803 458h1v1h-1zM803 484h1v1h-1zM803 511h1v1h-1zM803 537h1v1h-1zM803 563h1v1h-1zM803 589h1v1h-1zM803 616h1v1h-1zM803 642h1v1h-1zM803 668h1v1h-1zM803 694h1v1h-1zM803 721h1v1h-1zM803 747h1v1h-1zM803 773h1v1h-1zM803 799h1v1h-1zM829 117h1v1h-1zM829 143h1v1h-1zM829 169h1v1h-1zM829 196h1v1h-1zM829 222h1v1h-1zM829 248h1v1h-1zM829 274h1v1h-1zM829 301h1v1h-1zM829 327h1v1h-1zM829 353h1v1h-1zM829 379h1v1h-1zM829 406h1v1h-1zM829 432h1v1h-1zM829 458h1v1h-1zM829 484h1v1h-1zM829 511h1v1h-1zM829 537h1v1h-1zM829 563h1v1h-1zM829 589h1v1h-1zM829 616h1v1h-1zM829 642h1v1h-1zM829 668h1v1h-1zM829 694h1v1h-1zM829 721h1v1h-1zM829 747h1v1h-1zM829 773h1v1h-1zM829 799h1v1h-1zM855 117h1v1h-1zM855 143h1v1h-1zM855 169h1v1h-1zM855 196h1v1h-1zM855 222h1v1h-1zM855 248h1v1h-1zM855 274h1v1h-1zM855 301h1v1h-1zM855 327h1v1h-1zM855 353h1v1h-1zM855 379h1v1h-1zM855 406h1v1h-1zM855 432h1v1h-1zM855 458h1v1h-1zM855 484h1v1h-1zM855 511h1v1h-1zM855 537h1v1h-1zM855 563h1v1h-1zM855 589h1v1h-1zM855 616h1v1h-1zM855 642h1v1h-1zM855 668h1v1h-1zM855 694h1v1h-1zM855 721h1v1h-1zM855 747h1v1h-1zM855 773h1v1h-1zM855 799h1v1h-1zM881 117h1v1h-1zM881 143h1v1h-1zM881 169h1v1h-1zM881 196h1v1h-1zM881 222h1v1h-1zM881 248h1v1h-1zM881 274h1v1h-1zM881 301h1v1h-1zM881 327h1v1h-1zM881 353h1v1h-1zM881 379h1v1h-1zM881 406h1v1h-1zM881 432h1v1h-1zM881 458h1v1h-1zM881 484h1v1h-1zM881 511h1v1h-1zM881 537h1v1h-1zM881 563h1v1h-1zM881 589h1v1h-1zM881 616h1v1h-1zM881 642h1v1h-1zM881 668h1v1h-1zM881 694h1v1h-1zM881 721h1v1h-1zM881 747h1v1h-1zM881 773h1v1h-1zM881 799h1v1h-1zM908 117h1v1h-1zM908 143h1v1h-1zM908 169h1v1h-1zM908 196h1v1h-1zM908 222h1v1h-1zM908 248h1v1h-1zM908 274h1v1h-1zM908 301h1v1h-1zM908 327h1v1h-1zM908 353h1v1h-1zM908 379h1v1h-1zM908 406h1v1h-1zM908 432h1v1h-1zM908 458h1v1h-1zM908 484h1v1h-1zM908 511h1v1h-1zM908 537h1v1h-1zM908 563h1v1h-1zM908 589h1v1h-1zM908 616h1v1h-1zM908 642h1v1h-1zM908 668h1v1h-1zM908 694h1v1h-1zM908 721h1v1h-1zM908 747h1v1h-1zM908 773h1v1h-1zM908 799h1v1h-1zM934 117h1v1h-1zM934 143h1v1h-1zM934 169h1v1h-1zM934 196h1v1h-1zM934 222h1v1h-1zM934 248h1v1h-1zM934 274h1v1h-1zM934 301h1v1h-1zM934 327h1v1h-1zM934 353h1v1h-1zM934 379h1v1h-1zM934 406h1v1h-1zM934 432h1v1h-1zM934 458h1v1h-1zM934 484h1v1h-1zM934 511h1v1h-1zM934 537h1v1h-1zM934 563h1v1h-1zM934 589h1v1h-1zM934 616h1v1h-1zM934 642h1v1h-1zM934 668h1v1h-1zM934 694h1v1h-1zM934 721h1v1h-1zM934 747h1v1h-1zM934 773h1v1h-1zM934 799h1v1h-1zM960 117h1v1h-1zM960 143h1v1h-1zM960 169h1v1h-1zM960 196h1v1h-1zM960 222h1v1h-1zM960 248h1v1h-1zM960 274h1v1h-1zM960 301h1v1h-1zM960 327h1v1h-1zM960 353h1v1h-1zM960 379h1v1h-1zM960 406h1v1h-1zM960 432h1v1h-1zM960 458h1v1h-1zM960 484h1v1h-1zM960 511h1v1h-1zM960 537h1v1h-1zM960 563h1v1h-1zM960 589h1v1h-1zM960 616h1v1h-1zM960 642h1v1h-1zM960 668h1v1h-1zM960 694h1v1h-1zM960 721h1v1h-1zM960 747h1v1h-1zM960 773h1v1h-1zM960 799h1v1h-1zM986 117h1v1h-1zM986 143h1v1h-1zM986 169h1v1h-1zM986 196h1v1h-1zM986 222h1v1h-1zM986 248h1v1h-1zM986 274h1v1h-1zM986 301h1v1h-1zM986 327h1v1h-1zM986 353h1v1h-1zM986 379h1v1h-1zM986 406h1v1h-1zM986 432h1v1h-1zM986 458h1v1h-1zM986 484h1v1h-1zM986 511h1v1h-1zM986 537h1v1h-1zM986 563h1v1h-1zM986 589h1v1h-1zM986 616h1v1h-1zM986 642h1v1h-1zM986 668h1v1h-1zM986 694h1v1h-1zM986 721h1v1h-1zM986 747h1v1h-1zM986 773h1v1h-1zM986 799h1v1h-1zM1012 117h1v1h-1zM1012 143h1v1h-1zM1012 169h1v1h-1zM1012 196h1v1h-1zM1012 222h1v1h-1zM1012 248h1v1h-1zM1012 274h1v1h-1zM1012 301h1v1h-1zM1012 327h1v1h-1zM1012 353h1v1h-1zM1012 379h1v1h-1zM1012 406h1v1h-1zM1012 432h1v1h-1zM1012 458h1v1h-1zM1012 484h1v1h-1zM1012 511h1v1h-1zM1012 537h1v1h-1zM1012 563h1v1h-1zM1012 589h1v1h-1zM1012 616h1v1h-1zM1012 642h1v1h-1zM1012 668h1v1h-1zM1012 694h1v1h-1zM1012 721h1v1h-1zM1012 747h1v1h-1zM1012 773h1v1h-1zM1012 799h1v1h-1zM1039 117h1v1h-1zM1039 143h1v1h-1zM1039 169h1v1h-1zM1039 196h1v1h-1zM1039 222h1v1h-1zM1039 248h1v1h-1zM1039 274h1v1h-1zM1039 301h1v1h-1zM1039 327h1v1h-1zM1039 353h1v1h-1zM1039 379h1v1h-1zM1039 406h1v1h-1zM1039 432h1v1h-1zM1039 458h1v1h-1zM1039 484h1v1h-1zM1039 511h1v1h-1zM1039 537h1v1h-1zM1039 563h1v1h-1zM1039 589h1v1h-1zM1039 616h1v1h-1zM1039 642h1v1h-1zM1039 668h1v1h-1zM1039 694h1v1h-1zM1039 721h1v1h-1zM1039 747h1v1h-1zM1039 773h1v1h-1zM1039 799h1v1h-1zM1065 117h1v1h-1zM1065 143h1v1h-1zM1065 169h1v1h-1zM1065 196h1v1h-1zM1065 222h1v1h-1zM1065 248h1v1h-1zM1065 274h1v1h-1zM1065 301h1v1h-1zM1065 327h1v1h-1zM1065 353h1v1h-1zM1065 379h1v1h-1zM1065 406h1v1h-1zM1065 432h1v1h-1zM1065 458h1v1h-1zM1065 484h1v1h-1zM1065 511h1v1h-1zM1065 537h1v1h-1zM1065 563h1v1h-1zM1065 589h1v1h-1zM1065 616h1v1h-1zM1065 642h1v1h-1zM1065 668h1v1h-1zM1065 694h1v1h-1zM1065 721h1v1h-1zM1065 747h1v1h-1zM1065 773h1v1h-1zM1065 799h1v1h-1zM1091 117h1v1h-1zM1091 143h1v1h-1zM1091 169h1v1h-1zM1091 196h1v1h-1zM1091 222h1v1h-1zM1091 248h1v1h-1zM1091 274h1v1h-1zM1091 301h1v1h-1zM1091 327h1v1h-1zM1091 353h1v1h-1zM1091 379h1v1h-1zM1091 406h1v1h-1zM1091 432h1v1h-1zM1091 458h1v1h-1zM1091 484h1v1h-1zM1091 511h1v1h-1zM1091 537h1v1h-1zM1091 563h1v1h-1zM1091 589h1v1h-1zM1091 616h1v1h-1zM1091 642h1v1h-1zM1091 668h1v1h-1zM1091 694h1v1h-1zM1091 721h1v1h-1zM1091 747h1v1h-1zM1091 773h1v1h-1zM1091 799h1v1h-1zM1117 117h1v1h-1zM1117 143h1v1h-1zM1117 169h1v1h-1zM1117 196h1v1h-1zM1117 222h1v1h-1zM1117 248h1v1h-1zM1117 274h1v1h-1zM1117 301h1v1h-1zM1117 327h1v1h-1zM1117 353h1v1h-1zM1117 379h1v1h-1zM1117 406h1v1h-1zM1117 432h1v1h-1zM1117 458h1v1h-1zM1117 484h1v1h-1zM1117 511h1v1h-1zM1117 537h1v1h-1zM1117 563h1v1h-1zM1117 589h1v1h-1zM1117 616h1v1h-1zM1117 642h1v1h-1zM1117 668h1v1h-1zM1117 694h1v1h-1zM1117 721h1v1h-1zM1117 747h1v1h-1zM1117 773h1v1h-1zM1117 799h1v1h-1zM1144 117h1v1h-1zM1144 143h1v1h-1zM1144 169h1v1h-1zM1144 196h1v1h-1zM1144 222h1v1h-1zM1144 248h1v1h-1zM1144 274h1v1h-1zM1144 301h1v1h-1zM1144 327h1v1h-1zM1144 353h1v1h-1zM1144 379h1v1h-1zM1144 406h1v1h-1zM1144 432h1v1h-1zM1144 458h1v1h-1zM1144 484h1v1h-1zM1144 511h1v1h-1zM1144 537h1v1h-1zM1144 563h1v1h-1zM1144 589h1v1h-1zM1144 616h1v1h-1zM1144 642h1v1h-1zM1144 668h1v1h-1zM1144 694h1v1h-1zM1144 721h1v1h-1zM1144 747h1v1h-1zM1144 773h1v1h-1zM1144 799h1v1h-1zM1170 117h1v1h-1zM1170 143h1v1h-1zM1170 169h1v1h-1zM1170 196h1v1h-1zM1170 222h1v1h-1zM1170 248h1v1h-1zM1170 274h1v1h-1zM1170 301h1v1h-1zM1170 327h1v1h-1zM1170 353h1v1h-1zM1170 379h1v1h-1zM1170 406h1v1h-1zM1170 432h1v1h-1zM1170 458h1v1h-1zM1170 484h1v1h-1zM1170 511h1v1h-1zM1170 537h1v1h-1zM1170 563h1v1h-1zM1170 589h1v1h-1zM1170 616h1v1h-1zM1170 642h1v1h-1zM1170 668h1v1h-1zM1170 694h1v1h-1zM1170 721h1v1h-1zM1170 747h1v1h-1zM1170 773h1v1h-1zM1170 799h1v1h-1zM1196 117h1v1h-1zM1196 143h1v1h-1zM1196 169h1v1h-1zM1196 196h1v1h-1zM1196 222h1v1h-1zM1196 248h1v1h-1zM1196 274h1v1h-1zM1196 301h1v1h-1zM1196 327h1v1h-1zM1196 353h1v1h-1zM1196 379h1v1h-1zM1196 406h1v1h-1zM1196 432h1v1h-1zM1196 458h1v1h-1zM1196 484h1v1h-1zM1196 511h1v1h-1zM1196 537h1v1h-1zM1196 563h1v1h-1zM1196 589h1v1h-1zM1196 616h1v1h-1zM1196 642h1v1h-1zM1196 668h1v1h-1zM1196 694h1v1h-1zM1196 721h1v1h-1zM1196 747h1v1h-1zM1196 773h1v1h-1zM1196 799h1v1h-1zM1222 117h1v1h-1zM1222 143h1v1h-1zM1222 169h1v1h-1zM1222 196h1v1h-1zM1222 222h1v1h-1zM1222 248h1v1h-1zM1222 274h1v1h-1zM1222 301h1v1h-1zM1222 327h1v1h-1zM1222 353h1v1h-1zM1222 379h1v1h-1zM1222 406h1v1h-1zM1222 432h1v1h-1zM1222 458h1v1h-1zM1222 484h1v1h-1zM1222 511h1v1h-1zM1222 537h1v1h-1zM1222 563h1v1h-1zM1222 589h1v1h-1zM1222 616h1v1h-1zM1222 642h1v1h-1zM1222 668h1v1h-1zM1222 694h1v1h-1zM1222 721h1v1h-1zM1222 747h1v1h-1zM1222 773h1v1h-1zM1222 799h1v1h-1zM1249 117h1v1h-1zM1249 143h1v1h-1zM1249 169h1v1h-1zM1249 196h1v1h-1zM1249 222h1v1h-1zM1249 248h1v1h-1zM1249 274h1v1h-1zM1249 301h1v1h-1zM1249 327h1v1h-1zM1249 353h1v1h-1zM1249 379h1v1h-1zM1249 406h1v1h-1zM1249 432h1v1h-1zM1249 458h1v1h-1zM1249 484h1v1h-1zM1249 511h1v1h-1zM1249 537h1v1h-1zM1249 563h1v1h-1zM1249 589h1v1h-1zM1249 616h1v1h-1zM1249 642h1v1h-1zM1249 668h1v1h-1zM1249 694h1v1h-1zM1249 721h1v1h-1zM1249 747h1v1h-1zM1249 773h1v1h-1zM1249 799h1v1h-1zM1275 117h1v1h-1zM1275 143h1v1h-1zM1275 169h1v1h-1zM1275 196h1v1h-1zM1275 222h1v1h-1zM1275 248h1v1h-1zM1275 274h1v1h-1zM1275 301h1v1h-1zM1275 327h1v1h-1zM1275 353h1v1h-1zM1275 379h1v1h-1zM1275 406h1v1h-1zM1275 432h1v1h-1zM1275 458h1v1h-1zM1275 484h1v1h-1zM1275 511h1v1h-1zM1275 537h1v1h-1zM1275 563h1v1h-1zM1275 589h1v1h-1zM1275 616h1v1h-1zM1275 642h1v1h-1zM1275 668h1v1h-1zM1275 694h1v1h-1zM1275 721h1v1h-1zM1275 747h1v1h-1zM1275 773h1v1h-1zM1275 799h1v1h-1zM1301 117h1v1h-1zM1301 143h1v1h-1zM1301 169h1v1h-1zM1301 196h1v1h-1zM1301 222h1v1h-1zM1301 248h1v1h-1zM1301 274h1v1h-1zM1301 301h1v1h-1zM1301 327h1v1h-1zM1301 353h1v1h-1zM1301 379h1v1h-1zM1301 406h1v1h-1zM1301 432h1v1h-1zM1301 458h1v1h-1zM1301 484h1v1h-1zM1301 511h1v1h-1zM1301 537h1v1h-1zM1301 563h1v1h-1zM1301 589h1v1h-1zM1301 616h1v1h-1zM1301 642h1v1h-1zM1301 668h1v1h-1zM1301 694h1v1h-1zM1301 721h1v1h-1zM1301 747h1v1h-1zM1301 773h1v1h-1zM1301 799h1v1h-1zM1327 117h1v1h-1zM1327 143h1v1h-1zM1327 169h1v1h-1zM1327 196h1v1h-1zM1327 222h1v1h-1zM1327 248h1v1h-1zM1327 274h1v1h-1zM1327 301h1v1h-1zM1327 327h1v1h-1zM1327 353h1v1h-1zM1327 379h1v1h-1zM1327 406h1v1h-1zM1327 432h1v1h-1zM1327 458h1v1h-1zM1327 484h1v1h-1zM1327 511h1v1h-1zM1327 537h1v1h-1zM1327 563h1v1h-1zM1327 589h1v1h-1zM1327 616h1v1h-1zM1327 642h1v1h-1zM1327 668h1v1h-1zM1327 694h1v1h-1zM1327 721h1v1h-1zM1327 747h1v1h-1zM1327 773h1v1h-1zM1327 799h1v1h-1zM1354 117h1v1h-1zM1354 143h1v1h-1zM1354 169h1v1h-1zM1354 196h1v1h-1zM1354 222h1v1h-1zM1354 248h1v1h-1zM1354 274h1v1h-1zM1354 301h1v1h-1zM1354 327h1v1h-1zM1354 353h1v1h-1zM1354 379h1v1h-1zM1354 406h1v1h-1zM1354 432h1v1h-1zM1354 458h1v1h-1zM1354 484h1v1h-1zM1354 511h1v1h-1zM1354 537h1v1h-1zM1354 563h1v1h-1zM1354 589h1v1h-1zM1354 616h1v1h-1zM1354 642h1v1h-1zM1354 668h1v1h-1zM1354 694h1v1h-1zM1354 721h1v1h-1zM1354 747h1v1h-1zM1354 773h1v1h-1zM1354 799h1v1h-1zM1380 117h1v1h-1zM1380 143h1v1h-1zM1380 169h1v1h-1zM1380 196h1v1h-1zM1380 222h1v1h-1zM1380 248h1v1h-1zM1380 274h1v1h-1zM1380 301h1v1h-1zM1380 327h1v1h-1zM1380 353h1v1h-1zM1380 379h1v1h-1zM1380 406h1v1h-1zM1380 432h1v1h-1zM1380 458h1v1h-1zM1380 484h1v1h-1zM1380 511h1v1h-1zM1380 537h1v1h-1zM1380 563h1v1h-1zM1380 589h1v1h-1zM1380 616h1v1h-1zM1380 642h1v1h-1zM1380 668h1v1h-1zM1380 694h1v1h-1zM1380 721h1v1h-1zM1380 747h1v1h-1zM1380 773h1v1h-1zM1380 799h1v1h-1zM1406 117h1v1h-1zM1406 143h1v1h-1zM1406 169h1v1h-1zM1406 196h1v1h-1zM1406 222h1v1h-1zM1406 248h1v1h-1zM1406 274h1v1h-1zM1406 301h1v1h-1zM1406 327h1v1h-1zM1406 353h1v1h-1zM1406 379h1v1h-1zM1406 406h1v1h-1zM1406 432h1v1h-1zM1406 458h1v1h-1zM1406 484h1v1h-1zM1406 511h1v1h-1zM1406 537h1v1h-1zM1406 563h1v1h-1zM1406 589h1v1h-1zM1406 616h1v1h-1zM1406 642h1v1h-1zM1406 668h1v1h-1zM1406 694h1v1h-1zM1406 721h1v1h-1zM1406 747h1v1h-1zM1406 773h1v1h-1zM1406 799h1v1h-1zM1432 117h1v1h-1zM1432 143h1v1h-1zM1432 169h1v1h-1zM1432 196h1v1h-1zM1432 222h1v1h-1zM1432 248h1v1h-1zM1432 274h1v1h-1zM1432 301h1v1h-1zM1432 327h1v1h-1zM1432 353h1v1h-1zM1432 379h1v1h-1zM1432 406h1v1h-1zM1432 432h1v1h-1zM1432 458h1v1h-1zM1432 484h1v1h-1zM1432 511h1v1h-1zM1432 537h1v1h-1zM1432 563h1v1h-1zM1432 589h1v1h-1zM1432 616h1v1h-1zM1432 642h1v1h-1zM1432 668h1v1h-1zM1432 694h1v1h-1zM1432 721h1v1h-1zM1432 747h1v1h-1zM1432 773h1v1h-1zM1432 799h1v1h-1zM1459 117h1v1h-1zM1459 143h1v1h-1zM1459 169h1v1h-1zM1459 196h1v1h-1zM1459 222h1v1h-1zM1459 248h1v1h-1zM1459 274h1v1h-1zM1459 301h1v1h-1zM1459 327h1v1h-1zM1459 353h1v1h-1zM1459 379h1v1h-1zM1459 406h1v1h-1zM1459 432h1v1h-1zM1459 458h1v1h-1zM1459 484h1v1h-1zM1459 511h1v1h-1zM1459 537h1v1h-1zM1459 563h1v1h-1zM1459 589h1v1h-1zM1459 616h1v1h-1zM1459 642h1v1h-1zM1459 668h1v1h-1zM1459 694h1v1h-1zM1459 721h1v1h-1zM1459 747h1v1h-1zM1459 773h1v1h-1zM1459 799h1v1h-1zM1485 117h1v1h-1zM1485 143h1v1h-1zM1485 169h1v1h-1zM1485 196h1v1h-1zM1485 222h1v1h-1zM1485 248h1v1h-1zM1485 274h1v1h-1zM1485 301h1v1h-1zM1485 327h1v1h-1zM1485 353h1v1h-1zM1485 379h1v1h-1zM1485 406h1v1h-1zM1485 432h1v1h-1zM1485 458h1v1h-1zM1485 484h1v1h-1zM1485 511h1v1h-1zM1485 537h1v1h-1zM1485 563h1v1h-1zM1485 589h1v1h-1zM1485 616h1v1h-1zM1485 642h1v1h-1zM1485 668h1v1h-1zM1485 694h1v1h-1zM1485 721h1v1h-1zM1485 747h1v1h-1zM1485 773h1v1h-1zM1485 799h1v1h-1zM1511 117h1v1h-1zM1511 143h1v1h-1zM1511 169h1v1h-1zM1511 196h1v1h-1zM1511 222h1v1h-1zM1511 248h1v1h-1zM1511 274h1v1h-1zM1511 301h1v1h-1zM1511 327h1v1h-1zM1511 353h1v1h-1zM1511 379h1v1h-1zM1511 406h1v1h-1zM1511 432h1v1h-1zM1511 458h1v1h-1zM1511 484h1v1h-1zM1511 511h1v1h-1zM1511 537h1v1h-1zM1511 563h1v1h-1zM1511 589h1v1h-1zM1511 616h1v1h-1zM1511 642h1v1h-1zM1511 668h1v1h-1zM1511 694h1v1h-1zM1511 721h1v1h-1zM1511 747h1v1h-1zM1511 773h1v1h-1zM1511 799h1v1h-1zM1537 117h1v1h-1zM1537 143h1v1h-1zM1537 169h1v1h-1zM1537 196h1v1h-1zM1537 222h1v1h-1zM1537 248h1v1h-1zM1537 274h1v1h-1zM1537 301h1v1h-1zM1537 327h1v1h-1zM1537 353h1v1h-1zM1537 379h1v1h-1zM1537 406h1v1h-1zM1537 432h1v1h-1zM1537 458h1v1h-1zM1537 484h1v1h-1zM1537 511h1v1h-1zM1537 537h1v1h-1zM1537 563h1v1h-1zM1537 589h1v1h-1zM1537 616h1v1h-1zM1537 642h1v1h-1zM1537 668h1v1h-1zM1537 694h1v1h-1zM1537 721h1v1h-1zM1537 747h1v1h-1zM1537 773h1v1h-1zM1537 799h1v1h-1zM1564 117h1v1h-1zM1564 143h1v1h-1zM1564 169h1v1h-1zM1564 196h1v1h-1zM1564 222h1v1h-1zM1564 248h1v1h-1zM1564 274h1v1h-1zM1564 301h1v1h-1zM1564 327h1v1h-1zM1564 353h1v1h-1zM1564 379h1v1h-1zM1564 406h1v1h-1zM1564 432h1v1h-1zM1564 458h1v1h-1zM1564 484h1v1h-1zM1564 511h1v1h-1zM1564 537h1v1h-1zM1564 563h1v1h-1zM1564 589h1v1h-1zM1564 616h1v1h-1zM1564 642h1v1h-1zM1564 668h1v1h-1zM1564 694h1v1h-1zM1564 721h1v1h-1zM1564 747h1v1h-1zM1564 773h1v1h-1zM1564 799h1v1h-1zM1590 117h1v1h-1zM1590 143h1v1h-1zM1590 169h1v1h-1zM1590 196h1v1h-1zM1590 222h1v1h-1zM1590 248h1v1h-1zM1590 274h1v1h-1zM1590 301h1v1h-1zM1590 327h1v1h-1zM1590 353h1v1h-1zM1590 379h1v1h-1zM1590 406h1v1h-1zM1590 432h1v1h-1zM1590 458h1v1h-1zM1590 484h1v1h-1zM1590 511h1v1h-1zM1590 537h1v1h-1zM1590 563h1v1h-1zM1590 589h1v1h-1zM1590 616h1v1h-1zM1590 642h1v1h-1zM1590 668h1v1h-1zM1590 694h1v1h-1zM1590 721h1v1h-1zM1590 747h1v1h-1zM1590 773h1v1h-1zM1590 799h1v1h-1z"/>
<g fill="none" stroke="#ff0000" stroke-width="1.9"><rect x="793.89" y="239.64" width="5.4" height="5.4"/><rect x="688.99" y="318.31" width="5.4" height="5.4"/><rect x="793.89" y="318.31" width="5.4" height="5.4"/><rect x="793.89" y="396.98" width="5.4" height="5.4"/><rect x="1226.58" y="141.3" width="5.4" height="5.4"/><rect x="1121.69" y="219.97" width="5.4" height="5.4"/><rect x="1226.58" y="219.97" width="5.4" height="5.4"/><rect x="1226.58" y="298.64" width="5.4" height="5.4"/><rect x="793.89" y="508.44" width="5.4" height="5.4"/><rect x="688.99" y="587.11" width="5.4" height="5.4"/><rect x="793.89" y="587.11" width="5.4" height="5.4"/><rect x="793.89" y="665.78" width="5.4" height="5.4"/><rect x="1226.58" y="410.1" width="5.4" height="5.4"/><rect x="1121.69" y="488.77" width="5.4" height="5.4"/><rect x="1226.58" y="488.77" width="5.4" height="5.4"/><rect x="1226.58" y="567.44" width="5.4" height="5.4"/><rect x="623.43" y="423.21" width="5.4" height="5.4"/><rect x="780.78" y="423.21" width="5.4" height="5.4"/><rect x="682.44" y="718.23" width="5.4" height="5.4"/><rect x="315.3" y="436.32" width="5.4" height="5.4"/><rect x="315.3" y="541.22" width="5.4" height="5.4"/><rect x="426.75" y="554.33" width="5.4" height="5.4"/><rect x="426.75" y="665.78" width="5.4" height="5.4"/><rect x="538.2" y="574" width="5.4" height="5.4"/><rect x="538.2" y="678.89" width="5.4" height="5.4"/><rect x="944.68" y="547.77" width="5.4" height="5.4"/><rect x="944.68" y="652.67" width="5.4" height="5.4"/></g>
<g font-family="Liberation Sans, sans-serif" font-size="8"><text class="r" transform="translate(793.29 253.64) scale(0.97 1.07)">S</text><text class="r" transform="translate(688.39 332.31) scale(0.97 1.07)">G</text><text class="r" transform="translate(793.29 332.31) scale(0.97 1.07)">B</text><text class="r" transform="translate(793.29 410.98) scale(0.97 1.07)">D</text><text class="r" transform="translate(1225.98 155.3) scale(0.97 1.07)">S</text><text class="r" transform="translate(1121.09 233.97) scale(0.97 1.07)">G</text><text class="r" transform="translate(1225.98 233.97) scale(0.97 1.07)">B</text><text class="r" transform="translate(1225.98 312.64) scale(0.97 1.07)">D</text><text class="r" transform="translate(793.29 522.44) scale(0.97 1.07)">D</text><text class="r" transform="translate(688.39 601.11) scale(0.97 1.07)">G</text><text class="r" transform="translate(793.29 601.11) scale(0.97 1.07)">B</text><text class="r" transform="translate(793.29 679.78) scale(0.97 1.07)">S</text><text class="r" transform="translate(1225.98 424.1) scale(0.97 1.07)">D</text><text class="r" transform="translate(1121.09 502.77) scale(0.97 1.07)">G</text><text class="r" transform="translate(1225.98 502.77) scale(0.97 1.07)">B</text><text class="r" transform="translate(1225.98 581.44) scale(0.97 1.07)">S</text><text class="r" transform="translate(315 450) scale(0.97 1.07)">PLUS</text><text class="r" transform="translate(315 555) scale(0.97 1.07)">MINUS</text><text class="r" transform="translate(426 568.5) scale(0.97 1.07)">PLUS</text><text class="r" transform="translate(426 680.5) scale(0.97 1.07)">MINUS</text><text class="r" transform="translate(539 588.5) scale(0.97 1.07)">PLUS</text><text class="r" transform="translate(538 693) scale(0.97 1.07)">MINUS</text><text class="r" transform="translate(946 562) scale(0.97 1.07)">PLUS</text><text class="r" transform="translate(944 667) scale(0.97 1.07)">MINUS</text><text class="r" transform="translate(682 733) scale(0.97 1.07)">gnd!</text><text class="r" transform="translate(614.3 422.8) rotate(90) scale(0.97 1.07)">M</text></g>
<g font-family="Liberation Sans, sans-serif" font-size="8"><text class="y" transform="translate(802.89 244.94) scale(0.97 1.07)">I4</text><text class="y" transform="translate(802.89 264.34) scale(0.97 1.07)">w=4.0u</text><text class="y" transform="translate(802.89 277.44) scale(0.97 1.07)">l=0.45u</text><text class="y" transform="translate(802.89 290.54) scale(0.97 1.07)">ng=2</text><text class="y" transform="translate(802.89 303.64) scale(0.97 1.07)">m=1</text><text class="y" transform="translate(697.75 310.51) scale(0.97 1.07)" letter-spacing="-0.22">sg13_lv_pmos</text><text class="y" transform="translate(1235.58 146.6) scale(0.97 1.07)">I19</text><text class="y" transform="translate(1235.58 166) scale(0.97 1.07)">w=4.0u</text><text class="y" transform="translate(1235.58 179.1) scale(0.97 1.07)">l=0.45u</text><text class="y" transform="translate(1235.58 192.2) scale(0.97 1.07)">ng=2</text><text class="y" transform="translate(1235.58 205.3) scale(0.97 1.07)">m=1</text><text class="y" transform="translate(1130.44 212.17) scale(0.97 1.07)" letter-spacing="-0.22">sg13_lv_pmos</text><text class="y" transform="translate(802.89 513.74) scale(0.97 1.07)">I12</text><text class="y" transform="translate(802.89 533.14) scale(0.97 1.07)">w=2.0u</text><text class="y" transform="translate(802.89 546.24) scale(0.97 1.07)">l=0.45u</text><text class="y" transform="translate(802.89 559.34) scale(0.97 1.07)">ng=2</text><text class="y" transform="translate(802.89 572.44) scale(0.97 1.07)">m=1</text><text class="y" transform="translate(697.75 579.31) scale(0.97 1.07)" letter-spacing="-0.22">sg13_lv_nmos</text><text class="y" transform="translate(1235.58 415.4) scale(0.97 1.07)">I20</text><text class="y" transform="translate(1235.58 434.8) scale(0.97 1.07)">w=2.0u</text><text class="y" transform="translate(1235.58 447.9) scale(0.97 1.07)">l=0.45u</text><text class="y" transform="translate(1235.58 461) scale(0.97 1.07)">ng=2</text><text class="y" transform="translate(1235.58 474.1) scale(0.97 1.07)">m=1</text><text class="y" transform="translate(1130.44 480.97) scale(0.97 1.07)" letter-spacing="-0.22">sg13_lv_nmos</text><text class="y" transform="translate(329 440.5) scale(0.97 1.07)">I1</text><text class="y" transform="translate(334.5 483) scale(0.97 1.07)">DC=(vdd)</text><text class="y" transform="translate(307 493.5) scale(0.97 1.07)">vdc</text><text class="y" transform="translate(337 499) scale(0.97 1.07)">AC=0</text><text class="y" transform="translate(435 560.5) scale(0.97 1.07)">I22</text><text class="y" transform="translate(435 573.5) scale(0.97 1.07)">V0=0</text><text class="y" transform="translate(435 586.5) scale(0.97 1.07)">VA=1u</text><text class="y" transform="translate(435 599) scale(0.97 1.07)" letter-spacing="-0.3">FREQ=1000k</text><text class="y" transform="translate(422 605.5) scale(0.97 1.07)">isin</text><text class="y" transform="translate(435 611.5) scale(0.97 1.07)">TD=</text><text class="y" transform="translate(435 624.5) scale(0.97 1.07)">THETA=</text><text class="y" transform="translate(435 637.5) scale(0.97 1.07)">PHASE=</text><text class="y" transform="translate(552 578) scale(0.97 1.07)">I18</text><text class="y" transform="translate(558 620) scale(0.97 1.07)">DC=(Iin)</text><text class="y" transform="translate(530 632.5) scale(0.97 1.07)">idc</text><text class="y" transform="translate(560 637) scale(0.97 1.07)">AC=0</text><text class="y" transform="translate(953 546.5) scale(0.97 1.07)">I5</text><text class="y" transform="translate(953 567.5) scale(0.97 1.07)">C=1p</text><text class="y" transform="translate(953 578.5) scale(0.97 1.07)">IC=</text><text class="y" transform="translate(953 592) scale(0.97 1.07)">M=1</text><text class="y" transform="translate(927 606) scale(0.97 1.07)">cap</text><text class="c" transform="translate(612 730) scale(0.97 1.07)">gnd!</text><text class="c" transform="translate(740 730) scale(0.97 1.07)">gnd!</text><text class="c" transform="translate(1230 365) scale(0.97 1.07)">OUT</text><text class="y" transform="translate(709 446) rotate(90) scale(0.97 1.07)">R=?</text><text class="y" transform="translate(727.8 446) rotate(90) scale(0.97 1.07)">b=2</text><text class="y" transform="translate(741.8 445.5) rotate(90) scale(0.97 1.07)">m=1</text><text class="y" transform="translate(754.8 444.6) rotate(90) scale(0.97 1.07)">l=2u</text><text class="y" transform="translate(767.8 444.6) rotate(90) scale(0.97 1.07)">w=0.5u</text><text class="y" transform="translate(780.9 444.6) rotate(90) scale(0.97 1.07)">I13</text></g>
<g fill="none" stroke="#008000" stroke-width="4" stroke-linecap="square" stroke-linejoin="miter" stroke-miterlimit="3"><path d="M796.59 242.34 L796.59 275.12 L763.81 275.12"/><path d="M763.81 262.01 L763.81 380.02"/><path d="M750.7 281.68 L750.7 360.35"/><path d="M691.69 321.01 L750.7 321.01"/><path d="M763.81 366.9 L796.59 366.9 L796.59 399.68"/><path d="M765.12 275.12 L776.92 269.22 L776.92 281.02Z" stroke-linejoin="round"/><path d="M795.93 321.01 L782.16 315.11 L782.16 326.91Z" stroke-linejoin="round"/><path d="M1229.28 144 L1229.28 176.78 L1196.5 176.78"/><path d="M1196.5 163.67 L1196.5 281.68"/><path d="M1183.39 183.34 L1183.39 262.01"/><path d="M1124.39 222.67 L1183.39 222.67"/><path d="M1196.5 268.56 L1229.28 268.56 L1229.28 301.34"/><path d="M1197.82 176.78 L1209.62 170.88 L1209.62 182.68Z" stroke-linejoin="round"/><path d="M1228.63 222.67 L1214.86 216.77 L1214.86 228.57Z" stroke-linejoin="round"/><path d="M796.59 511.14 L796.59 543.92 L763.81 543.92"/><path d="M763.81 530.8 L763.81 648.81"/><path d="M750.7 550.47 L750.7 629.14"/><path d="M691.69 589.81 L750.7 589.81"/><path d="M763.81 635.7 L796.59 635.7 L796.59 668.48"/><path d="M763.81 589.81 L796.59 589.81"/><path d="M795.93 635.7 L783.48 629.8 L783.48 641.6Z" stroke-linejoin="round"/><path d="M1229.28 412.8 L1229.28 445.58 L1196.5 445.58"/><path d="M1196.5 432.46 L1196.5 550.47"/><path d="M1183.39 452.13 L1183.39 530.8"/><path d="M1124.39 491.47 L1183.39 491.47"/><path d="M1196.5 537.36 L1229.28 537.36 L1229.28 570.14"/><path d="M1196.5 491.47 L1229.28 491.47"/><path d="M1228.63 537.36 L1216.17 531.46 L1216.17 543.26Z" stroke-linejoin="round"/><path d="M626.13 425.91 L652.36 425.91 L658.91 445.58 L672.02 406.24 L685.14 445.58 L698.25 406.24 L711.36 445.58 L724.47 406.24 L737.58 445.58 L750.7 406.24 L757.25 425.91 L783.48 425.91"/><path d="M685.14 720.93 L685.14 747.15"/><path d="M665.47 747.15 L704.8 747.15 L685.14 765.51Z"/><path d="M318 439.02 L318 471.8"/><path d="M318 511.14 L318 543.92"/><path d="M311.44 484.91 L324.56 484.91"/><path d="M318 478.36 L318 491.47"/><path d="M429.45 557.03 L429.45 596.36"/><path d="M429.45 635.7 L429.45 668.48"/><path d="M429.45 601.61 L429.45 623.24"/><path d="M422.24 616.69 L422.24 609.48 L429.45 601.61 L436.66 608.82 L437.32 623.24 L429.45 623.24"/><path d="M540.9 576.7 L540.9 609.48"/><path d="M540.9 648.81 L540.9 681.59"/><path d="M540.9 616.03 L540.9 642.26"/><path d="M534.35 622.59 L540.9 616.03 L547.46 622.59"/><path d="M947.38 550.47 L947.38 596.36"/><path d="M947.38 609.48 L947.38 655.37"/><path d="M921.15 596.36 L973.6 596.36"/><path d="M921.15 609.48 L973.6 609.48"/><circle cx="318" cy="491.47" r="19.67"/><circle cx="429.45" cy="616.03" r="19.67"/><circle cx="540.9" cy="629.14" r="19.67"/></g>
<path fill="none" stroke="#00ffff" stroke-width="1.5" d="M318 144L1275.18 144 M1275.18 144L1275.18 222.67 M1275.18 222.67L1229.28 222.67 M318 144L318 439.02 M318 543.92L318 720.93 M318 720.93L1281.73 720.93 M1281.73 720.93L1281.73 491.47 M1281.73 491.47L1229.28 491.47 M796.59 144L796.59 242.34 M849.04 144L849.04 321.01 M849.04 321.01L796.59 321.01 M691.69 321.01L606.46 321.01 M606.46 321.01L606.46 589.81 M606.46 589.81L691.69 589.81 M606.46 425.91L626.13 425.91 M783.48 425.91L796.59 425.91 M796.59 399.68L796.59 511.14 M796.59 491.47L1124.39 491.47 M1058.83 491.47L1058.83 222.67 M1058.83 222.67L1124.39 222.67 M1229.28 301.34L1229.28 412.8 M1229.28 570.14L1229.28 720.93 M429.45 557.03L429.45 511.14 M429.45 511.14L606.46 511.14 M429.45 668.48L429.45 720.93 M540.9 511.14L540.9 576.7 M540.9 681.59L540.9 720.93 M796.59 589.81L855.59 589.81 M855.59 589.81L855.59 720.93 M796.59 668.48L796.59 720.93 M947.38 491.47L947.38 550.47 M947.38 655.37L947.38 720.93"/>
<g fill="#00ffff"><circle cx="796.59" cy="144" r="7.2"/><circle cx="849.04" cy="144" r="7.2"/><circle cx="606.46" cy="425.91" r="7.2"/><circle cx="796.59" cy="425.91" r="7.2"/><circle cx="796.59" cy="491.47" r="7.2"/><circle cx="947.38" cy="491.47" r="7.2"/><circle cx="1058.83" cy="491.47" r="7.2"/><circle cx="540.9" cy="511.14" r="7.2"/><circle cx="606.46" cy="511.14" r="7.2"/><circle cx="429.45" cy="720.93" r="7.2"/><circle cx="540.9" cy="720.93" r="7.2"/><circle cx="796.59" cy="720.93" r="7.2"/><circle cx="855.59" cy="720.93" r="7.2"/><circle cx="947.38" cy="720.93" r="7.2"/><circle cx="1229.28" cy="720.93" r="7.2"/></g>
</svg>
<div id="status"><div class="t">Select Item</div></div>
<div id="rl"></div><div class="grip" style="left:1595px;top:821px"></div><div class="grip" style="left:1592px;top:824px"></div><div class="grip" style="left:1595px;top:824px"></div><div class="grip" style="left:1589px;top:827px"></div><div class="grip" style="left:1592px;top:827px"></div><div class="grip" style="left:1595px;top:827px"></div><div class="grip" style="left:1586px;top:830px"></div><div class="grip" style="left:1589px;top:830px"></div><div class="grip" style="left:1592px;top:830px"></div>
<div id="rb"></div>
<svg style="position:absolute;left:0;top:826px" width="8" height="7"><path d="M0 2Q3 4 5 7" stroke="#ff8c00" stroke-width="2" fill="none"/></svg>
</body></html>
